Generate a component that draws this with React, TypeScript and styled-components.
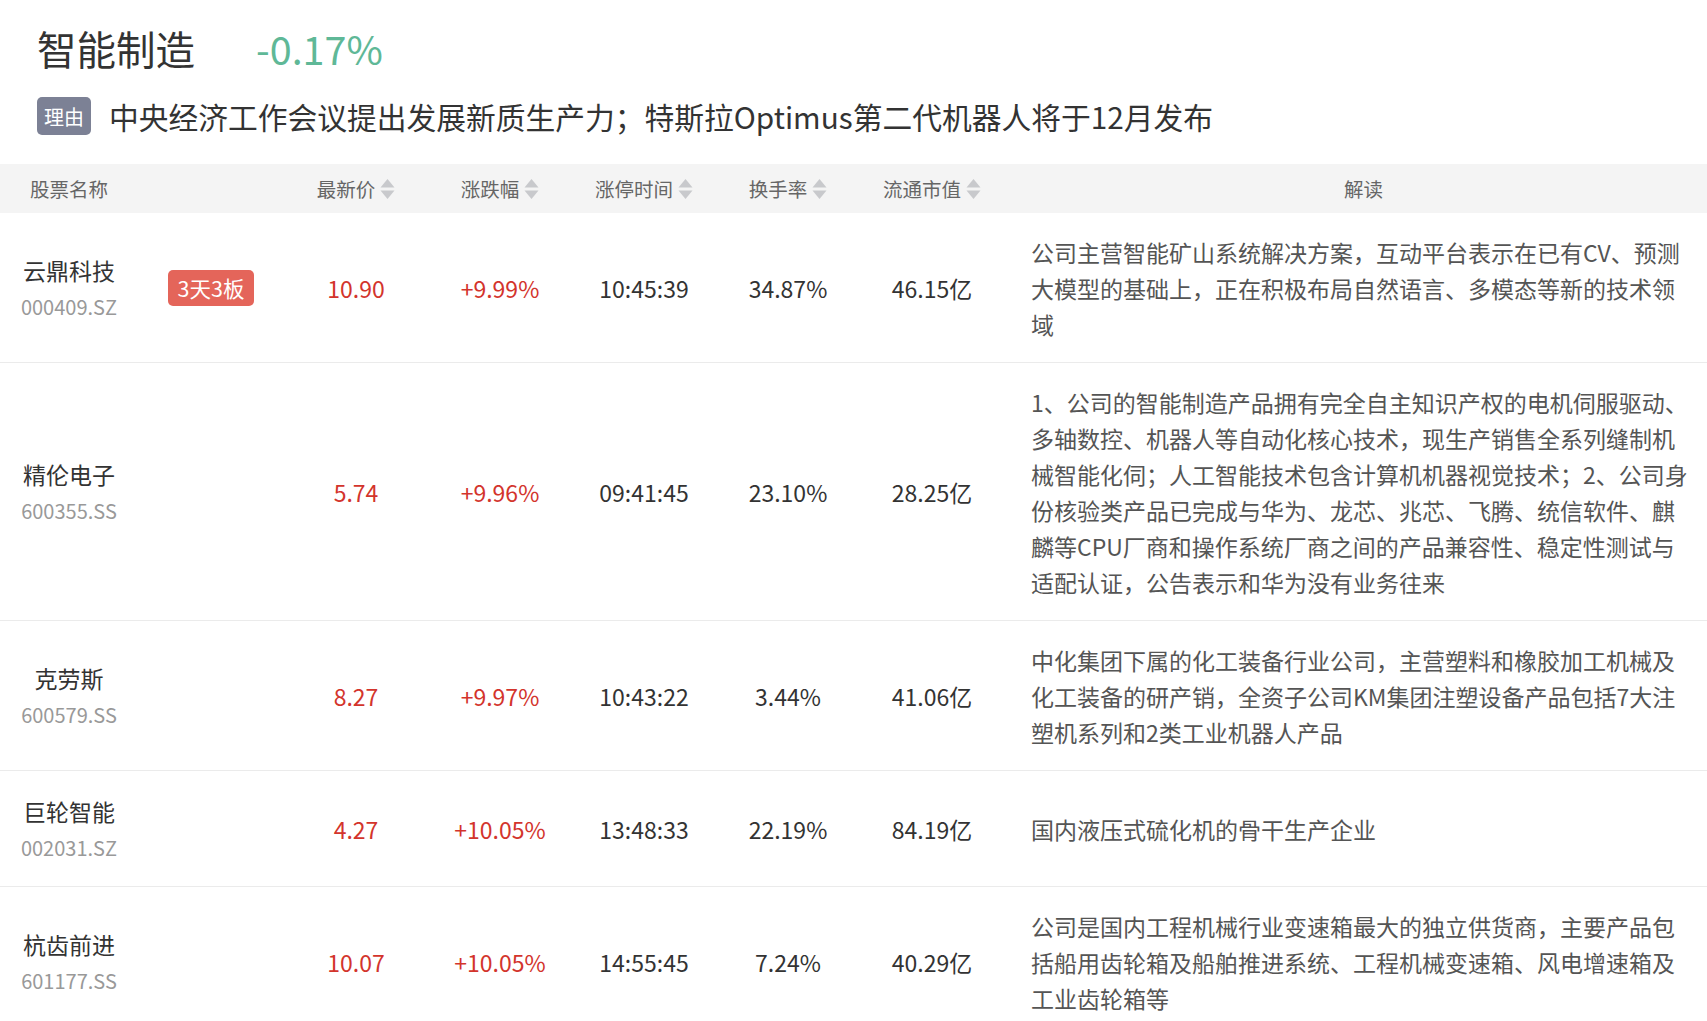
import * as React from 'react';
import styled, { createGlobalStyle } from 'styled-components';

const GlobalStyle = createGlobalStyle`
  html, body {
    margin: 0;
    padding: 0;
    background: #fff;
  }
  body {
    font-family: "Noto Sans CJK SC", "Noto Sans", sans-serif;
    color: #333;
  }
`;

const COLS = '138px 146px 144px 144px 144px 144px 144px 1fr';

interface Stock {
  name: string;
  code: string;
  badge?: string;
  price: string;
  change: string;
  time: string;
  turnover: string;
  cap: string;
  desc: string;
}

const stocks: Stock[] = [
  {
    name: '云鼎科技',
    code: '000409.SZ',
    badge: '3天3板',
    price: '10.90',
    change: '+9.99%',
    time: '10:45:39',
    turnover: '34.87%',
    cap: '46.15亿',
    desc: '公司主营智能矿山系统解决方案，互动平台表示在已有CV、预测大模型的基础上，正在积极布局自然语言、多模态等新的技术领域',
  },
  {
    name: '精伦电子',
    code: '600355.SS',
    price: '5.74',
    change: '+9.96%',
    time: '09:41:45',
    turnover: '23.10%',
    cap: '28.25亿',
    desc: '1、公司的智能制造产品拥有完全自主知识产权的电机伺服驱动、多轴数控、机器人等自动化核心技术，现生产销售全系列缝制机械智能化伺；人工智能技术包含计算机机器视觉技术；2、公司身份核验类产品已完成与华为、龙芯、兆芯、飞腾、统信软件、麒麟等CPU厂商和操作系统厂商之间的产品兼容性、稳定性测试与适配认证，公告表示和华为没有业务往来',
  },
  {
    name: '克劳斯',
    code: '600579.SS',
    price: '8.27',
    change: '+9.97%',
    time: '10:43:22',
    turnover: '3.44%',
    cap: '41.06亿',
    desc: '中化集团下属的化工装备行业公司，主营塑料和橡胶加工机械及化工装备的研产销，全资子公司KM集团注塑设备产品包括7大注塑机系列和2类工业机器人产品',
  },
  {
    name: '巨轮智能',
    code: '002031.SZ',
    price: '4.27',
    change: '+10.05%',
    time: '13:48:33',
    turnover: '22.19%',
    cap: '84.19亿',
    desc: '国内液压式硫化机的骨干生产企业',
  },
  {
    name: '杭齿前进',
    code: '601177.SS',
    price: '10.07',
    change: '+10.05%',
    time: '14:55:45',
    turnover: '7.24%',
    cap: '40.29亿',
    desc: '公司是国内工程机械行业变速箱最大的独立供货商，主要产品包括船用齿轮箱及船舶推进系统、工程机械变速箱、风电增速箱及工业齿轮箱等',
  },
];

const Page = styled.div`
  width: 100%;
  min-height: 100vh;
  overflow: hidden;
`;

const Head = styled.section`
  padding: 20px 0 0 37px;
`;

const TitleRow = styled.div`
  display: flex;
  align-items: center;
  height: 56px;
`;

const Title = styled.h1`
  margin: 0;
  font-size: 39.5px;
  font-weight: 400;
  line-height: 56px;
  color: #333;
`;

const Pct = styled.span`
  margin-left: 61px;
  font-size: 39.5px;
  line-height: 56px;
  color: #5fb897;
`;

const ReasonRow = styled.div`
  display: flex;
  align-items: center;
  margin-top: 21px;
  height: 38px;
`;

const ReasonTag = styled.span`
  display: inline-flex;
  align-items: center;
  justify-content: center;
  height: 38px;
  padding: 0 7px;
  border-radius: 5px;
  background: #7c8195;
  color: #fff;
  font-size: 20px;
`;

const ReasonText = styled.span`
  margin-left: 18px;
  font-size: 29.75px;
  color: #333;
  white-space: nowrap;
`;

const Table = styled.div`
  margin-top: 29px;
`;

const HeaderRow = styled.div`
  display: grid;
  grid-template-columns: ${COLS};
  height: 49px;
  align-items: center;
  background: #f4f4f4;
  color: #666;
  font-size: 19.5px;
`;

const HeadCell = styled.div<{ $pad?: boolean }>`
  display: flex;
  align-items: center;
  justify-content: center;
  gap: 5px;
  padding-left: ${(p) => (p.$pad ? '16px' : '0')};
`;

const Row = styled.div`
  display: grid;
  grid-template-columns: ${COLS};
  align-items: center;
  padding: 20.5px 0;
  border-bottom: 1px solid #ebebeb;
`;

const NameBlock = styled.div`
  display: flex;
  flex-direction: column;
  align-items: center;
`;

const Name = styled.span`
  font-size: 23px;
  line-height: 38px;
  color: #333;
`;

const Code = styled.span`
  font-size: 20px;
  line-height: 36px;
  color: #999;
`;

const BadgeCell = styled.div`
  display: flex;
  justify-content: center;
`;

const Badge = styled.span`
  display: inline-flex;
  align-items: center;
  height: 36px;
  padding: 0 10px;
  border-radius: 5px;
  background: #e4655a;
  color: #fff;
  font-size: 21.5px;
`;

const Value = styled.div<{ $up?: boolean }>`
  text-align: center;
  font-size: 23px;
  line-height: 36px;
  color: ${(p) => (p.$up ? '#d3342c' : '#333')};
`;

const Desc = styled.div`
  padding: 0 16px 0 27px;
  font-size: 23px;
  line-height: 36px;
  color: #555;
`;

const SortIcon = () => (
  <svg width="15" height="22" viewBox="0 0 15 22">
    <path d="M7.5 1 L14.5 9.5 L0.5 9.5 Z" fill="#c8c9cc" />
    <path d="M0.5 12.5 L14.5 12.5 L7.5 21 Z" fill="#c8c9cc" />
  </svg>
);

const sortable = ['最新价', '涨跌幅', '涨停时间', '换手率', '流通市值'];

export default function App() {
  return (
    <Page>
      <GlobalStyle />
      <Head>
        <TitleRow>
          <Title>智能制造</Title>
          <Pct>-0.17%</Pct>
        </TitleRow>
        <ReasonRow>
          <ReasonTag>理由</ReasonTag>
          <ReasonText>中央经济工作会议提出发展新质生产力；特斯拉Optimus第二代机器人将于12月发布</ReasonText>
        </ReasonRow>
      </Head>
      <Table>
        <HeaderRow>
          <HeadCell>股票名称</HeadCell>
          <HeadCell />
          {sortable.map((h) => (
            <HeadCell key={h}>
              {h}
              <SortIcon />
            </HeadCell>
          ))}
          <HeadCell $pad>解读</HeadCell>
        </HeaderRow>
        {stocks.map((s) => (
          <Row key={s.code}>
            <NameBlock>
              <Name>{s.name}</Name>
              <Code>{s.code}</Code>
            </NameBlock>
            <BadgeCell>{s.badge && <Badge>{s.badge}</Badge>}</BadgeCell>
            <Value $up>{s.price}</Value>
            <Value $up>{s.change}</Value>
            <Value>{s.time}</Value>
            <Value>{s.turnover}</Value>
            <Value>{s.cap}</Value>
            <Desc>{s.desc}</Desc>
          </Row>
        ))}
      </Table>
    </Page>
  );
}
